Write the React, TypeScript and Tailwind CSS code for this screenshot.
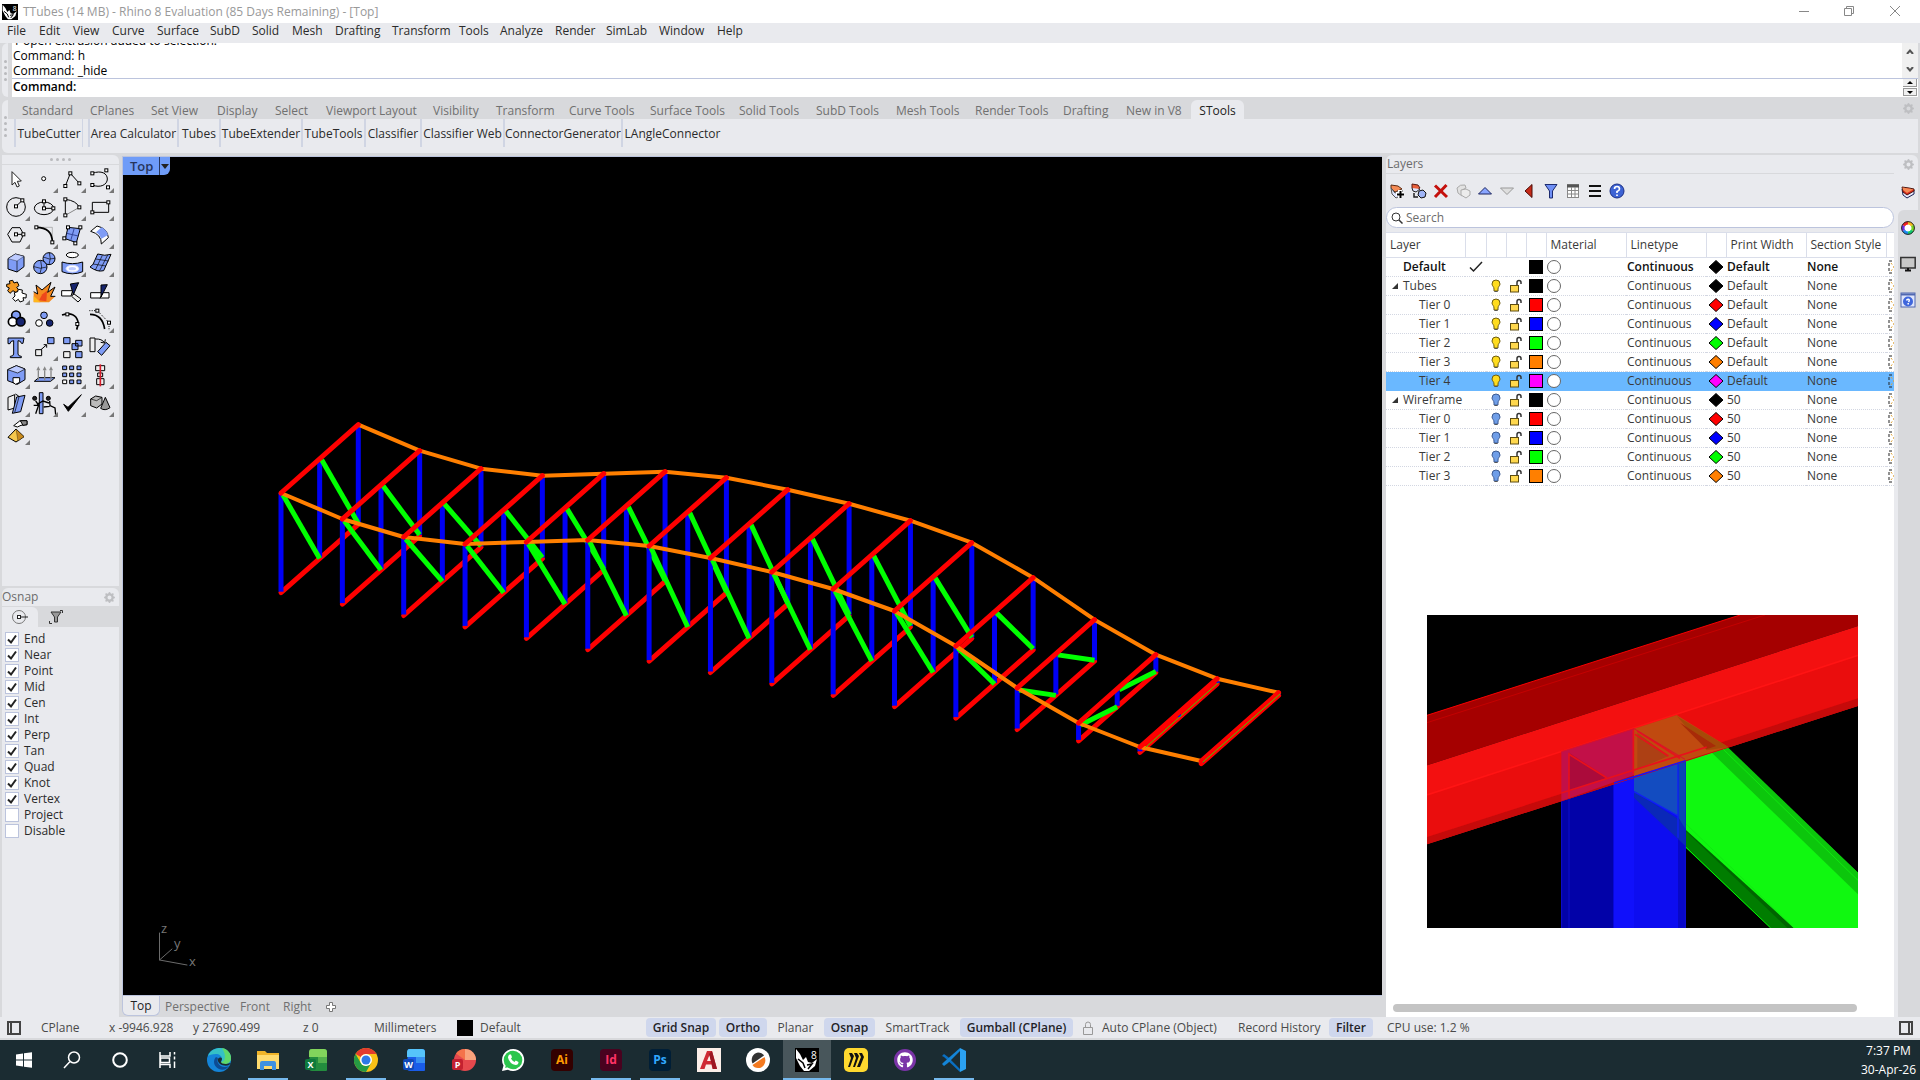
import type { ReactNode } from 'react';
import { FaGithub, FaWhatsapp } from 'react-icons/fa';
import { BsGearFill } from 'react-icons/bs';

const menus = [
  ['File', 'w-8'],
  ['Edit', 'w-[34px]'],
  ['View', 'w-[39px]'],
  ['Curve', 'w-[45px]'],
  ['Surface', 'w-[53px]'],
  ['SubD', 'w-[42px]'],
  ['Solid', 'w-10'],
  ['Mesh', 'w-[43px]'],
  ['Drafting', 'w-[57px]'],
  ['Transform', 'w-[67px]'],
  ['Tools', 'w-[41px]'],
  ['Analyze', 'w-[55px]'],
  ['Render', 'w-[51px]'],
  ['SimLab', 'w-[53px]'],
  ['Window', 'w-[58px]'],
  ['Help', 'w-10'],
];

const toolTabs = [
  ['Standard', 'w-[68px]'],
  ['CPlanes', 'w-[61px]'],
  ['Set View', 'w-[66px]'],
  ['Display', 'w-[58px]'],
  ['Select', 'w-[51px]'],
  ['Viewport Layout', 'w-[107px]'],
  ['Visibility', 'w-[63px]'],
  ['Transform', 'w-[73px]'],
  ['Curve Tools', 'w-[81px]'],
  ['Surface Tools', 'w-[89px]'],
  ['Solid Tools', 'w-[77px]'],
  ['SubD Tools', 'w-20'],
  ['Mesh Tools', 'w-[79px]'],
  ['Render Tools', 'w-[88px]'],
  ['Drafting', 'w-[63px]'],
  ['New in V8', 'w-[73px]'],
];

const toolButtons = [
  ['TubeCutter', 'w-[69px]'],
  ['Area Calculator', 'w-[89px]'],
  ['Tubes', 'w-[42px]'],
  ['TubeExtender', 'w-[82px]'],
  ['TubeTools', 'w-[63px]'],
  ['Classifier', 'w-14'],
  ['Classifier Web', 'w-[83px]'],
  ['ConnectorGenerator', 'w-[118px]'],
  ['LAngleConnector', 'w-[101px]'],
];

const osnaps = ['End', 'Near', 'Point', 'Mid', 'Cen', 'Int', 'Perp', 'Tan', 'Quad', 'Knot', 'Vertex', 'Project', 'Disable'];

type Layer = { name: string; color: string; width: string; on?: boolean; child?: boolean; current?: boolean; selected?: boolean };

const layers: Layer[] = [
  { name: 'Default', color: '#000000', width: 'Default', current: true },
  { name: 'Tubes', color: '#000000', width: 'Default', on: true },
  { name: 'Tier 0', color: '#ff0000', width: 'Default', on: true, child: true },
  { name: 'Tier 1', color: '#0000ff', width: 'Default', on: true, child: true },
  { name: 'Tier 2', color: '#00ff00', width: 'Default', on: true, child: true },
  { name: 'Tier 3', color: '#ff7f00', width: 'Default', on: true, child: true },
  { name: 'Tier 4', color: '#ff00ff', width: 'Default', on: true, child: true, selected: true },
  { name: 'Wireframe', color: '#000000', width: '50' },
  { name: 'Tier 0', color: '#ff0000', width: '50', child: true },
  { name: 'Tier 1', color: '#0000ff', width: '50', child: true },
  { name: 'Tier 2', color: '#00ff00', width: '50', child: true },
  { name: 'Tier 3', color: '#ff7f00', width: '50', child: true },
];

/* ---------- tool palette ---------- */

function Nodes({ at }: { at: number[][] }) {
  return (
    <>
      {at.map(([x, y]) => (
        <rect key={`${x}-${y}`} x={x - 4.5} y={y - 4.5} width="9" height="9" fill="#fff" stroke="#000" strokeWidth="3" />
      ))}
    </>
  );
}

const blue = '#7f9cf5';
const navy = '#16246e';

// All glyphs share one sheet, 84 units per cell, first cell at (5, 44)
const glyphs: { name: string; flyout?: boolean; art: ReactNode }[] = [
  { name: 'Pointer', art: <path d="M35 64V104L44 96L50 110L57 107L51 93L63 92Z" fill="#fff" stroke="#222" strokeWidth="3" /> },
  { name: 'Point', flyout: true, art: <circle cx="130" cy="85" r="6" fill="#fff" stroke="#000" strokeWidth="3" /> },
  { name: 'Polyline', flyout: true, art: <><path d="M195 107L210 69L237 99" /><Nodes at={[[195, 107], [210, 69], [237, 99]]} /></> },
  { name: 'Curve', flyout: true, art: <><path d="M276 69C303 59 321 69 321 86C321 103 300 114 276 104" /><Nodes at={[[276, 69], [276, 104], [318, 60], [323, 111]]} /></> },
  { name: 'Circle', flyout: true, art: <><circle cx="47" cy="170" r="28" /><path d="M47 168L66 150" /><Nodes at={[[47, 168], [66, 150]]} /></> },
  { name: 'Ellipse', flyout: true, art: <><ellipse cx="131" cy="174" rx="29" ry="19" /><path d="M131 153V174H160" /><Nodes at={[[131, 153], [131, 174], [159, 174]]} /></> },
  { name: 'Arc', flyout: true, art: <><path d="M195 195L237 171" stroke="#888" /><path d="M195 195V147Q228 151 237 171" /><Nodes at={[[195, 147], [237, 171], [195, 195]]} /></> },
  { name: 'Rectangle', flyout: true, art: <><path d="M276 156H325V186H276Z" /><Nodes at={[[324, 156], [276, 186]]} /></> },
  { name: 'Polygon', flyout: true, art: <><path d="M35 232H59L70 252L59 275H35L22 252Z" /><path d="M47 252H69" /><Nodes at={[[47, 252], [69, 252]]} /></> },
  { name: 'Fillet', flyout: true, art: <><path d="M108 231H156V276" stroke="#999" strokeWidth="2" /><path d="M108 231Q156 231 156 276" strokeWidth="5" /><Nodes at={[[108, 231], [156, 276]]} /></> },
  { name: 'Surface from points', flyout: true, art: <><path d="M203 231L240 235L228 277L195 265Z" fill={blue} /><path d="M222 233L211 271M199 249L234 257" stroke="#34479c" /><Nodes at={[[203, 231], [240, 231], [192, 264], [225, 279]]} /></> },
  { name: 'Revolve', flyout: true, art: <><path d="M271 243L290 227Q322 234 324 262L303 281Q304 252 271 243Z" fill="#fff" /><path d="M287 246L304 231Q319 239 323 254L302 266Q299 252 287 246Z" fill={blue} stroke="none" /></> },
  { name: 'Box', flyout: true, art: <><path d="M23 325L45 311L71 318V349L50 365L23 356Z" fill={blue} /><path d="M23 325L50 332L71 318L45 311Z" fill="#bdcbff" strokeWidth="1" /><path d="M50 332V365" strokeWidth="2" /></> },
  { name: 'Sphere', flyout: true, art: <><circle cx="146" cy="325" r="18" fill={blue} /><path d="M129 320Q148 330 164 324M147 307Q153 325 146 343" strokeWidth="2" /><circle cx="120" cy="350" r="20" fill={blue} /><path d="M101 349Q120 358 139 350M121 331Q128 350 119 369" strokeWidth="2" /></> },
  { name: 'Offset surface', flyout: true, art: <><ellipse cx="216" cy="314" rx="18" ry="8" fill="#fff" /><path d="M185 335Q216 345 247 335V364Q216 377 185 364Z" fill={blue} /><ellipse cx="216" cy="355" rx="19" ry="10" fill="#fff" stroke="#d9e0ff" /><ellipse cx="216" cy="355" rx="11" ry="5" fill="#bdcbff" stroke="none" /></> },
  { name: 'Patch', flyout: true, art: <><path d="M292 311Q314 318 332 312L310 361Q291 366 269 350L278 342Z" fill={blue} /><path d="M306 315L285 359M322 314L297 363M286 326L325 332M278 341L317 347" strokeWidth="2" /></> },
  { name: 'Explode parts', flyout: true, art: <><path d="M19 402l10-2-2-8 10-2 4 8 10-3 5 11-7 5 6 8-8 8-9-6-9 8-7-8 5-8-8-4Z" fill="#f59a23" /><path d="M42 427l10-3 2-7 12 2-1 9 13 4-1 11-9-1 2 9-11 4-5-8-9 6-8-9 7-7Z" fill="#fff" /></> },
  { name: 'Explode', art: <><path d="M100 456V424L112 431L107 404L125 419L152 396L142 426L164 410L151 438H165L146 456Z" fill="#f58a1f" stroke="none" /><path d="M100 424L112 431L107 404L125 419L152 396L142 426L164 410L151 438H165" /><path d="M100 455V436L120 456Z" fill="#ffb71c" stroke="none" /><path d="M126 432L140 421L138 453L116 450Z" fill="#ed471c" stroke="none" /></> },
  { name: 'Trim', art: <><path d="M184 421H217L212 437H184Z" fill="#fff" /><path d="M220 430L242 446L233 455L214 438Z" fill="#eee" /><path d="M210 401L235 397L219 433Z" fill={navy} /></> },
  { name: 'Split', art: <><path d="M271 427H326V443H271Z" fill="#fff" /><path d="M302 404L321 403L302 440Z" fill={navy} /><path d="M299 444L307 429" /></> },
  { name: 'Group', flyout: true, art: <><g stroke="#000" strokeWidth="5"><circle cx="47" cy="495" r="13" fill={blue} /><circle cx="37" cy="514" r="13" fill="#fff" /><circle cx="61" cy="514" r="13" fill={navy} /></g></> },
  { name: 'Ungroup', art: <><circle cx="131" cy="495" r="10" fill={blue} /><circle cx="116" cy="518" r="10" fill="#fff" /><circle cx="148" cy="518" r="10" fill={navy} /></> },
  { name: 'Edit points', art: <><path d="M185 494Q225 482 233 514Q234 525 229 538" strokeWidth="5" /><Nodes at={[[201, 492], [231, 521]]} /></> },
  { name: 'Control points', flyout: true, art: <><path d="M269 492Q306 492 313 536" strokeWidth="5" /><path d="M267 481H291L326 517V541" strokeDasharray="3 4" /><Nodes at={[[291, 481], [326, 517]]} /></> },
  { name: 'Text', art: <path d="M23 563H71L68 579H63Q62 571 53 571V611Q54 618 63 618V622H30V618Q39 618 40 611V571Q30 571 29 580H23Z" fill={blue} /> },
  { name: 'Move', flyout: true, art: <><path d="M106 598H124V616H106Z" fill="#eee" /><path d="M142 562H161V580H142Z" fill={blue} /><path d="M122 598L138 584M130 583H139V592" /></> },
  { name: 'Copy', art: <><path d="M190 562H209V580H190ZM226 570H245V587H226ZM215 580H233V598H215ZM226 604H245V622H226Z" fill={blue} /><path d="M190 604H209V622H190Z" fill="#eee" /></> },
  { name: 'Rotate', art: <><path d="M269 563H284V604H269Z" fill="#eee" /><path d="M317 576L329 586L304 615L292 604Z" fill={blue} /><path d="M285 566Q305 565 312 577M301 576L313 578L315 567" /></> },
  { name: 'Solid corner', flyout: true, art: <><path d="M22 658L48 646L74 656V688L51 702L22 691Z" fill={blue} /><path d="M22 658L52 668L74 656L48 646Z" fill="#bdcbff" strokeWidth="2" /><path d="M38 682H58V696L46 702L38 696Z" fill="#fff" /></> },
  { name: 'Extrude', flyout: true, art: <><path d="M102 693L115 682H164L151 693Z" fill={blue} /><path d="M114 690V660M133 690V660M152 690V660" stroke="#888" strokeWidth="4" /><path d="M108 660L114 648L120 660ZM127 660L133 648L139 660ZM146 660L152 648L158 660Z" fill="#888" stroke="none" /></> },
  { name: 'Array', flyout: true, art: <><path d="M187 647H199V658H187ZM208 647H220V658H208ZM230 647H242V658H230ZM187 668H199V679H187ZM208 668H220V679H208ZM230 668H242V679H230ZM208 689H220V700H208ZM230 689H242V700H230Z" fill={blue} /><path d="M187 689H199V700H187Z" fill="#fff" /></> },
  { name: 'Align', flyout: true, art: <><path d="M286 646H313V661H286ZM292 668H307V679H292ZM289 685H311V703H289Z" fill="#eee" /><path d="M300 642V708" stroke="#d51d2b" strokeWidth="5" /></> },
  { name: 'Shear', flyout: true, art: <><path d="M23 741L43 733V773L23 779Z" fill="#eee" /><path d="M45 731L55 737L53 750" /><path d="M49 740L74 735L61 784L36 789Z" fill={blue} /><path d="M56 740L43 787" strokeWidth="2" /></> },
  { name: 'Flow', flyout: true, art: <><g fill="#222"><circle cx="103" cy="744" r="6" /><circle cx="144" cy="744" r="6" /></g><path d="M117 727H128V790H117Z" fill={blue} /><path d="M106 752L115 764L106 790M115 765H100M146 758L128 752L110 762M148 752L149 766L164 773L166 793M130 770L148 768" strokeWidth="4" /></> },
  { name: 'Check', flyout: true, art: <path d="M190 762L204 783L243 733L203 771Z" fill="#000" /> },
  { name: 'Primitives', flyout: true, art: <><path d="M271 746L286 737L305 741V761L289 773L271 766Z" fill="#bbb" /><path d="M271 746L289 751L305 741" strokeWidth="2" /><path d="M315 741L329 772Q314 783 301 774Z" fill="#999" /></> },
  { name: 'Render', flyout: true, art: <><path d="M40 826L58 812L80 812V823L62 825L51 830Z" fill="#fff" /><path d="M60 811L80 811V823L68 825Z" fill="#888" /><path d="M47 836L71 859L47 875L23 861Z" fill="#f5c84d" /><path d="M47 836L53 872L71 859Z" fill="#c88b1e" strokeWidth="1" /></> },
];

function ToolPalette() {
  return (
    <section className="h-[431px] shrink-0 rounded-tr-md bg-[#e9eaee]">
      <div className="flex h-[10px] items-center justify-center gap-[3px] border-b border-[#d8d9dc]">
        {[0, 1, 2, 3].map((i) => (
          <span key={i} className="size-[3px] rounded-full bg-[#b9babd]" />
        ))}
      </div>
      <div className="grid grid-cols-[repeat(4,28px)]">
        {glyphs.map((g, i) => {
          const x = 5 + 84 * (i % 4);
          const y = 44 + 84 * Math.floor(i / 4);
          return (
            <button key={g.name} aria-label={g.name} className="size-7">
              <svg viewBox={`${x} ${y} 84 84`} className="size-7" fill="none" stroke="#000" strokeWidth="3">
                {g.art}
                {g.flyout && <path d={`M${x + 84} ${y + 69}V${y + 84}H${x + 69}Z`} fill="#777" stroke="none" />}
              </svg>
            </button>
          );
        })}
      </div>
    </section>
  );
}

function OsnapPanel() {
  return (
    <section className="flex flex-1 flex-col rounded-t-md bg-[#e9eaee]">
      <header className="flex h-[19px] items-center justify-between border-b border-[#d8d9dc] pr-1 text-[#6c6c6c]">
        <h2>Osnap</h2>
        <BsGearFill className="size-[11px] text-[#bebfc2]" />
      </header>
      <div className="flex h-5 bg-[#d8d9dc]">
        <button aria-label="Object snaps" className="flex w-9 items-center justify-center rounded-tr-md bg-[#e9eaee]">
          <svg viewBox="0 0 18 16" className="h-4 w-[18px]" fill="none" stroke="#777">
            <circle cx="8" cy="8" r="6.5" />
            <path d="M8 8h9" stroke="#222" />
            <rect x="6.5" y="6.5" width="3" height="3" fill="#fff" stroke="#222" />
          </svg>
        </button>
        <button aria-label="Selection filter" className="flex w-9 items-center justify-center">
          <svg viewBox="0 0 16 16" className="size-4" fill="none" stroke="#333">
            <path d="M3 3h10L9.500 8v5h-3V8z" fill="#999" />
            <path d="M12 1.500h2.500V4M1.500 12v2.500H4" />
          </svg>
        </button>
      </div>
      <div className="pt-1">
        {osnaps.map((name, i) => (
          <label key={name} className="flex h-4 items-center gap-[5px] pl-[3px] text-[#2b2b2b]">
            <span className="grid size-[14px]">
              <input type="checkbox" defaultChecked={i < 11} className="peer col-start-1 row-start-1 size-[14px] appearance-none border border-[#bcc4dd] bg-white" />
              <svg viewBox="0 0 14 14" className="pointer-events-none col-start-1 row-start-1 hidden size-[14px] peer-checked:block" fill="none" stroke="#222" strokeWidth="2">
                <path d="M3 7.500L6 10.500L11 3.500" />
              </svg>
            </span>
            {name}
          </label>
        ))}
      </div>
    </section>
  );
}

/* ---------- viewport ---------- */

// upper chord height of every frame, front side
const chord = [493, 519, 537, 544, 542, 540, 546, 558, 572, 589, 611, 646, 688, 723, 747, 761];
const frames = chord.map((top, i) => ({ x: 281 + 61.35 * i, top, bottom: 592.7 + 11.4 * i }));
const DX = 77.3;
const DY = -68.3;

function Truss() {
  return (
    <svg viewBox="123 157 1259 839" preserveAspectRatio="xMinYMin meet" className="block w-full" fill="none" strokeLinecap="round">
      {frames.map((f, i) => (
        <g key={i}>
          <path d={`M${f.x} ${f.bottom}l${DX} ${DY}`} stroke="#f00" strokeWidth="5" />
          <g stroke="#0000f5" strokeWidth="5" strokeLinecap="butt">
            {[1, 0.5, 0].map((t) => (
              <path key={t} d={`M${f.x + DX * t} ${f.top + DY * t}V${f.bottom + DY * t - 1}`} />
            ))}
          </g>
          {i < 14 && (
            <g stroke="#00ff00" strokeWidth="5" strokeLinecap="butt">
              <path d={`M${f.x + 2} ${f.top + 2}L${f.x + DX / 2} ${f.bottom + DY / 2}`} />
              <path d={`M${f.x + DX / 2 + 2} ${f.top + DY / 2 + 1}L${f.x + DX} ${f.bottom + DY - 1}`} />
            </g>
          )}
        </g>
      ))}
      <g stroke="#ff7f00" strokeWidth="4" strokeLinejoin="round">
        <polyline points={frames.map((f) => `${f.x + DX},${f.top + DY}`).join(' ')} />
        <polyline points={frames.map((f) => `${f.x},${f.top}`).join(' ')} />
      </g>
      {frames.map((f, i) => (
        <path key={i} d={`M${f.x} ${f.top}l${DX} ${DY}`} stroke="#f00" strokeWidth="5" />
      ))}
      <path d="M1146 747L1218 683M1203 762L1280 694" stroke="#3fd000" strokeWidth="1" />
      <g stroke="#6c6c6c">
        <path d="M159.500 933V960L187 965M159.500 960L172 949" />
      </g>
      <g fill="#777" className="font-['Open_Sans',sans-serif] text-[13px]">
        <text x="161" y="933">z</text>
        <text x="174" y="948">y</text>
        <text x="189" y="966">x</text>
      </g>
    </svg>
  );
}

function Viewport() {
  return (
    <main className="flex min-w-0 flex-1 flex-col pt-px">
      <div className="relative min-h-0 flex-1 overflow-hidden border border-r-0 border-[#bcc4dd] bg-black">
        <Truss />
        <div className="absolute top-0 left-0 flex h-[18px] rounded-br-md bg-[#6f9cf8] text-[13px] leading-[17px] font-semibold text-[#26355c]">
          <button className="w-9 pl-[7px] text-left">Top</button>
          <button aria-label="Viewport menu" className="flex w-[11px] items-center justify-center border-l border-[#26355c]">
            <svg viewBox="0 0 8 5" className="h-[5px] w-2" fill="#222">
              <path d="M0 0h8L4 5z" />
            </svg>
          </button>
        </div>
      </div>
      <nav className="flex h-[21px] shrink-0 items-start leading-[22px] text-[#707070]">
        <button className="h-5 w-[38px] rounded-b-md border border-t-0 border-[#bcc4dd] bg-[#e9eaee] leading-[20px] text-[#222]">Top</button>
        <button className="w-[75px] pl-[5px] text-left">Perspective</button>
        <button className="w-[43px] pl-[5px] text-left">Front</button>
        <button className="w-12 pl-[5px] text-left">Right</button>
        <button aria-label="New viewport" className="flex h-[22px] items-center">
          <svg viewBox="0 0 10 10" className="size-[10px]" fill="#fff" stroke="#777">
            <path d="M3.500.5h3v3h3v3h-3v3h-3v-3h-3v-3h3z" />
          </svg>
        </button>
      </nav>
    </main>
  );
}

/* ---------- layers ---------- */

const layerTools: { name: string; art: ReactNode }[] = [
  { name: 'New layer', art: <><path d="M3 3l7 1 4 3-7 3-4-4z" fill="#f58b55" stroke="#5a2a12" /><path d="M3 6l1 6 4 4 6-3V8l-7 3z" fill="#dfe6ff" stroke="#555" /><path d="M12 8v8M8 12h8" stroke="#fff" strokeWidth="4" /><path d="M12.500 9v7M9 12.500h7" stroke="#000" strokeWidth="2" /></> },
  { name: 'New sublayer', art: <><path d="M2 2l6 1 2 3-5 3-3-3z" fill="#e8603a" stroke="#5a1a12" /><path d="M2 6l1 3 3 1 4-3" fill="#dfe6ff" stroke="#222" /><path d="M4 11v4h4" stroke="#222" strokeWidth="1.500" /><path d="M9 9l4-1 3 3-1 4-4 1-3-3z" fill="#9fb4f5" stroke="#111" /></> },
  { name: 'Delete layer', art: <path d="M3 3.500L15 15M14.500 3L3 15" stroke="#c4100c" strokeWidth="3" /> },
  { name: 'Duplicate layer', art: <><path d="M3 6q3-4 8-3l1 3-4 2v6l-4-3z" fill="#e2e2e2" stroke="#aaa" /><path d="M7 8l5-1 4 2v4l-4 3-5-3z" fill="#ececec" stroke="#aaa" /></> },
  { name: 'Move up', art: <path d="M2.500 12L9 5.500L15.500 12z" fill="#8aa6ff" stroke="#1c2560" /> },
  { name: 'Move down', art: <path d="M2.500 6L9 12.500L15.500 6z" fill="#dedede" stroke="#999" /> },
  { name: 'Move out', art: <path d="M5 9L12 2.500V15.500z" fill="#c62a18" stroke="#4a0c08" /> },
  { name: 'Filter', art: <path d="M3 2.500h12L10.500 9v7h-3V9z" fill="#6f8ff5" stroke="#1c2a6e" /> },
  { name: 'Columns', art: <><rect x="3.500" y="2.500" width="11" height="13" fill="#fff" stroke="#888" /><path d="M3 4h12" stroke="#555" strokeWidth="3" /><path d="M3 8.500h12M3 12h12M7.500 5v10M11 5v10" stroke="#888" /></> },
  { name: 'Menu', art: <path d="M3 4h12M3 9h12M3 14h12" stroke="#111" strokeWidth="2" /> },
  { name: 'Help', art: <><circle cx="9" cy="9" r="7" fill="#3d63d4" stroke="#1b2f86" /><path d="M6.500 7Q6.500 4.500 9 4.500T11.500 7Q11.500 8.500 9 9.500V11M9 12.500V14" stroke="#fff" strokeWidth="1.700" /></> },
];

function LayerRow({ layer }: { layer: Layer }) {
  const { name, color, width, on, child, current, selected } = layer;
  return (
    <tr className={`h-[19px] border-b border-dotted ${selected ? 'border-[#6ab8ff] bg-[#6ab8ff]' : 'border-[#d3d7e2]'} ${current ? 'font-semibold text-[#111]' : ''}`}>
      <td className={child ? 'pl-[33px]' : 'pl-[6px]'}>
        <span className="flex items-center">
          {!child && (
            <svg viewBox="0 0 11 8" className="h-2 w-[11px]">
              {!current && <path d="M6 1v6H0z" fill="#333" />}
            </svg>
          )}
          {name}
        </span>
      </td>
      <td>
        {current && (
          <svg viewBox="0 0 14 12" className="mx-auto h-3 w-[14px]" fill="none" stroke="#222" strokeWidth="1.500">
            <path d="M1 6.500L4.500 10L13 1" />
          </svg>
        )}
      </td>
      <td>
        {!current && (
          <svg viewBox="0 0 10 14" className="mx-auto h-[14px] w-[10px]">
            <path d="M5 1a4 4 0 0 0-4 4c0 2 2 2.500 2 5v2h4v-2c0-2.500 2-3 2-5a4 4 0 0 0-4-4z" fill={on ? '#ffdc1e' : '#6f9ee8'} stroke={on ? '#6d5c10' : '#3c5a92'} />
            <path d="M3.500 12.500h3" stroke="#555" />
          </svg>
        )}
      </td>
      <td>
        {!current && (
          <svg viewBox="0 0 12 14" className="mx-auto h-[14px] w-3">
            <path d="M7 7V3.500a2 2 0 0 1 4 0V5" fill="none" stroke="#333" strokeWidth="1.500" />
            <rect x=".5" y="6.500" width="8" height="6.500" fill="#ffd84d" stroke="#5c4c12" />
          </svg>
        )}
      </td>
      <td>
        <svg viewBox="0 0 14 14" className="mx-auto size-[14px]">
          <rect x=".5" y=".5" width="13" height="13" fill={color} stroke="#000" />
        </svg>
      </td>
      <td className="pl-px">
        <svg viewBox="0 0 14 14" className="size-[14px]">
          <circle cx="7" cy="7" r="6.500" fill="#fff" stroke="#666" />
        </svg>
      </td>
      <td className="pl-px">Continuous</td>
      <td>
        <svg viewBox="0 0 16 14" className="mx-auto h-[14px] w-4">
          <path d="M8 .5L15 7L8 13.500L1 7z" fill={color} stroke="#000" />
        </svg>
      </td>
      <td className="pl-px">{width}</td>
      <td className="pl-px">None</td>
      <td>
        <svg viewBox="0 0 6 14" className="ml-[2px] h-[14px] w-[6px]" fill="none" stroke="#222">
          <path d="M4 1H1v12h3" strokeDasharray="3 2" />
          <path d="M3 3l3 4-3 4" stroke="#e0a43a" strokeDasharray="2 2" />
        </svg>
      </td>
    </tr>
  );
}

function LayersTable() {
  const heads = ['Layer', '', '', '', '', 'Material', 'Linetype', '', 'Print Width', 'Section Style', ''];
  return (
    <table className="w-full table-fixed border-collapse leading-[16px] whitespace-nowrap text-[#3a3a3a]">
      <colgroup>
        <col className="w-[79px]" />
        <col className="w-[21px]" />
        <col className="w-5" />
        <col className="w-5" />
        <col className="w-5" />
        <col className="w-20" />
        <col className="w-20" />
        <col className="w-5" />
        <col className="w-20" />
        <col className="w-20" />
        <col className="w-2" />
      </colgroup>
      <thead>
        <tr className="h-[25px] border-y border-[#dadeea]">
          {heads.map((h, i) => (
            <th key={i} className="border-r border-[#dadeea] p-0 pl-1 text-left font-normal last:border-r-0">
              {h}
            </th>
          ))}
        </tr>
      </thead>
      <tbody>
        {layers.map((layer, i) => (
          <LayerRow key={i} layer={layer} />
        ))}
      </tbody>
    </table>
  );
}

// close-up of a joint: chord, post and diagonal with their overlaps
function JointPreview() {
  return (
    <svg viewBox="21 42 1293 939" className="h-[313px] w-[431px] bg-black">
      <path d="M640 580L797 684L1125 981H1052L797 740L640 590Z" fill="#007d00" />
      <path d="M797 690L1102 981H1125L797 668Z" fill="#006400" />
      <path d="M797 478L910 430L1314 815V981H1122L797 686Z" fill="#10f810" />
      <path d="M865 445L925 440L1314 815V880Z" fill="#0cc60c" />
      <path d="M905 440L1314 838M797 668L1122 981" stroke="#10e810" strokeWidth="3" />
      <path d="M797 738L1052 981" stroke="#00ff00" strokeWidth="3" />
      <path d="M424 590L797 475V981H424Z" fill="#0d0df0" />
      <path d="M424 590L580 545V981H424Z" fill="#0202a8" />
      <path d="M582 545L642 525V981H582Z" fill="#1010fb" />
      <path d="M774 480H797V981H774Z" fill="#0808c8" />
      <path d="M425 590V981M447 590V981M796 478V981" stroke="#1414e0" strokeWidth="2" fill="none" />
      <path d="M642 525L775 485V645L642 572Z" fill="#134cc0" />
      <path d="M642 570L797 668V736L642 590Z" fill="#0a28b8" />
      <path d="M775 485L797 478V684L775 650Z" fill="#0a45b4" />
      <path d="M642 572L775 645M774 485V710" stroke="#1020f5" strokeWidth="4" fill="none" />
      <path d="M21 343L960 42H1314V75L21 493Z" fill="#a50000" />
      <path d="M21 365L1035 42" stroke="#c40000" strokeWidth="3" />
      <path d="M21 343L960 42" stroke="#f50000" strokeWidth="3" />
      <path d="M21 493L1314 75V315L21 730Z" fill="#f31010" />
      <path d="M21 582L1314 163V292L21 708Z" fill="#ea0d0d" />
      <path d="M21 582L1314 163" stroke="#ff1414" strokeWidth="5" />
      <path d="M21 708L1314 292V315L21 730Z" fill="#c60a0a" />
      <path d="M424 452L642 383V522L424 600Z" fill="#c21048" />
      <path d="M447 455L562 530L447 570Z" fill="#ab0b3b" />
      <path d="M642 383L770 342L925 438L642 526Z" fill="#c04a10" />
      <path d="M770 345L925 438L860 448Z" fill="#a54a08" />
      <path d="M652 395L745 465L652 505Z" fill="#ad4014" />
      <path d="M780 365L888 435L860 445Z" fill="#a82a08" />
      <path d="M424 576L860 438M447 455V590M447 460L560 530M640 385V520M652 390L780 472M645 400L745 465" stroke="#e8101c" strokeWidth="5" fill="none" />
      <path d="M424 452L642 383L795 475" stroke="#d8102c" strokeWidth="3" fill="none" />
      <path d="M582 546L797 479" stroke="#1414ff" strokeWidth="4" />
    </svg>
  );
}

function LayersPanel() {
  return (
    <aside className="flex w-[532px] shrink-0 flex-col overflow-hidden rounded-t-md bg-[#e9eaee]">
      <header className="flex h-[18px] shrink-0 items-center justify-between pr-1 pl-px text-[#6c6c6c]">
        <h2>Layers</h2>
        <BsGearFill className="size-[11px] text-[#bebfc2]" />
      </header>
      <div className="flex min-h-0 flex-1">
        <div className="flex min-w-0 flex-1 flex-col border-t border-[#d8d9dc]">
          <div className="flex h-[33px] shrink-0 items-center gap-1 pl-[2px]">
            {layerTools.map((t) => (
              <button key={t.name} aria-label={t.name} className="size-[18px]">
                <svg viewBox="0 0 18 18" className="size-[18px]" fill="none">
                  {t.art}
                </svg>
              </button>
            ))}
          </div>
          <label className="mb-1 flex h-[21px] shrink-0 items-center gap-[3px] rounded-full border border-[#bcc4dd] bg-white pl-1">
            <svg viewBox="0 0 12 12" className="size-3" fill="none" stroke="#333">
              <circle cx="5" cy="5" r="4" />
              <path d="M8 8l3.500 3.500" strokeWidth="1.500" />
            </svg>
            <input aria-label="Search" placeholder="Search" className="min-w-0 flex-1 outline-none placeholder:text-[#6c6c6c]" />
          </label>
          <div className="flex min-h-0 flex-1 flex-col bg-white">
            <LayersTable />
            <div className="flex flex-1 items-center justify-center pt-[52px] pl-1">
              <JointPreview />
            </div>
            <div className="mr-[37px] mb-[5px] ml-[7px] h-2 rounded-full bg-[#c4c4c4]" />
          </div>
        </div>
        <nav className="ml-1 flex w-5 flex-col">
          <button aria-label="Layers" className="flex h-[37px] items-center justify-center">
            <svg viewBox="0 0 14 14" className="size-[14px]">
              <path d="M1 4l1 6 4 3 7-4V5L6 9z" fill="#e8eaff" stroke="#1b2255" />
              <path d="M1 2l7 1 5 1v2L6 10 2 7z" fill="#d92a1c" stroke="#4c1a12" />
              <path d="M1.500 2.500l6 1 5 1L6 8 2 5z" fill="#f58a55" />
            </svg>
          </button>
          <div className="flex flex-1 flex-col rounded-tl-md bg-[#d8d9dc]">
            <button aria-label="Materials" className="flex h-9 items-center justify-center">
              <svg viewBox="0 0 14 14" className="size-[14px]" fill="none" strokeWidth="3">
                <circle cx="7" cy="7" r="4" fill="#fff" />
                <path d="M7 2a5 5 0 0 1 4.300 2.500" stroke="#f5b81c" />
                <path d="M11.300 4.500a5 5 0 0 1 0 5" stroke="#7ad820" />
                <path d="M11.300 9.500A5 5 0 0 1 7 12" stroke="#10c86c" />
                <path d="M7 12a5 5 0 0 1-4.300-2.500" stroke="#1c8cf0" />
                <path d="M2.700 9.500a5 5 0 0 1 0-5" stroke="#7030e0" />
                <path d="M2.700 4.500A5 5 0 0 1 7 2" stroke="#f02020" />
                <circle cx="7" cy="7" r="6.400" stroke="#222" strokeWidth="1" />
              </svg>
            </button>
            <button aria-label="Display" className="flex h-9 items-center justify-center">
              <svg viewBox="0 0 16 16" className="size-4">
                <path d="M.8 1.500h14.400v10.500H.8z" fill="#c8c8c8" stroke="#333" strokeWidth="1.500" />
                <path d="M5 14.500h6M8 12v2" stroke="#111" strokeWidth="2" />
              </svg>
            </button>
            <button aria-label="Help" className="flex h-9 items-center justify-center">
              <svg viewBox="0 0 16 16" className="size-4" fill="none">
                <rect x="1" y="1" width="14" height="14" fill="#dfe5fb" stroke="#5068b0" />
                <path d="M1 2.500h14" stroke="#5068b0" strokeWidth="2" />
                <circle cx="8" cy="9.500" r="5" fill="#3f66dc" />
                <path d="M6.500 8.500Q7 7 8.500 7.300T8.500 10M8.200 11v1.500" stroke="#fff" strokeWidth="1.500" />
              </svg>
            </button>
          </div>
        </nav>
      </div>
    </aside>
  );
}

/* ---------- status bar ---------- */

const toggle = 'h-[19px] rounded-sm';
const toggleOn = `${toggle} bg-[#cfd7ed] font-semibold text-[#1f1f28]`;

function StatusBar() {
  return (
    <footer className="flex h-[23px] shrink-0 items-center border-b-2 border-[#d8d9dc] bg-[#e9eaee] pl-[7px] text-[#4a4a4a]">
      <svg viewBox="0 0 14 14" className="mr-5 size-[14px]" fill="none" stroke="#444" strokeWidth="2">
        <path d="M1 1h12v12H1zM4 1v12" />
      </svg>
      <span className="w-[68px]">CPlane</span>
      <span className="w-[84px]">x -9946.928</span>
      <span className="w-[110px]">y 27690.499</span>
      <span className="w-[71px]">z 0</span>
      <span className="w-[83px]">Millimeters</span>
      <span className="mr-[7px] size-4 bg-black" />
      <span className="w-[166px]">Default</span>
      <button className={`${toggleOn} mr-[3px] w-[70px]`}>Grid Snap</button>
      <button className={`${toggleOn} w-12`}>Ortho</button>
      <button className={`${toggle} w-[57px]`}>Planar</button>
      <button className={`${toggleOn} w-[51px]`}>Osnap</button>
      <button className={`${toggle} w-[85px]`}>SmartTrack</button>
      <button className={`${toggleOn} mr-[9px] w-[113px]`}>Gumball (CPlane)</button>
      <svg viewBox="0 0 12 14" className="mr-2 h-[14px] w-3" fill="none" stroke="#999">
        <path d="M1.500 6.500h9v7h-9zM3.500 6V3.500a2.500 2.500 0 0 1 5 0V6" />
      </svg>
      <button className="w-[136px] text-left">Auto CPlane (Object)</button>
      <button className="w-[91px] text-left">Record History</button>
      <button className={`${toggleOn} mr-[14px] w-11`}>Filter</button>
      <span className="flex-1">CPU use: 1.2 %</span>
      <svg viewBox="0 0 14 14" className="mr-[7px] size-[14px]" fill="none" stroke="#444" strokeWidth="2">
        <path d="M1 1h12v12H1zM10 1v12" />
      </svg>
    </footer>
  );
}

/* ---------- taskbar ---------- */

function RhinoMark() {
  return (
    <>
      <rect width="24" height="24" fill="#000" />
      <path d="M1 1l4 5 3 6 3-3 2 5 4 1 5-4-2 7-6 5H9l-4-5-4-8z" fill="#fff" />
      <path d="M3 11l5 4 2 5M12 17l5-1-4 5" stroke="#000" fill="none" strokeWidth="1.500" />
      <text x="16" y="11" fill="#fff" className="font-['Open_Sans',sans-serif] text-[10px] leading-none">8</text>
    </>
  );
}

function Office({ letter, dark, light, mid }: { letter: string; dark: string; light: string; mid: string }) {
  return (
    <>
      <path d="M5 1h14a3 3 0 0 1 3 3v18a1 1 0 0 1-1 1H7a3 3 0 0 1-3-3z" fill={mid} />
      <path d="M7 1h12a3 3 0 0 1 3 3v5H4V4a3 3 0 0 1 3-3z" fill={light} />
      <path d="M13 9h9v6h-9z" fill={light} opacity=".5" />
      <rect x="0" y="11" width="11" height="11" rx="2" fill={dark} />
      <text x="5.500" y="20" textAnchor="middle" fill="#fff" className="font-['Open_Sans',sans-serif] text-[9px] font-bold">{letter}</text>
    </>
  );
}

function AdobeTile({ label, bg, fg }: { label: string; bg: string; fg: string }) {
  return (
    <>
      <rect x="1" y="1" width="22" height="22" rx="4" fill={bg} />
      <text x="12" y="16" textAnchor="middle" fill={fg} className="font-['Open_Sans',sans-serif] text-[12px] font-bold">{label}</text>
    </>
  );
}

const system: { name: string; art: ReactNode }[] = [
  { name: 'Start', art: <path d="M4 6.500l7-1v6H4zM12 5.300l8-1.100v7.300h-8zM4 12.500h7v6l-7-1zM12 12.500h8v7.300l-8-1.100z" fill="#fff" /> },
  { name: 'Search', art: <path d="M4 20l6-6.500M14 4a5.500 5.500 0 1 1 0 11a5.500 5.500 0 0 1 0-11z" stroke="#fff" strokeWidth="1.500" fill="none" /> },
  { name: 'Cortana', art: <circle cx="12" cy="12" r="6.800" fill="none" stroke="#fff" strokeWidth="2" /> },
  { name: 'Task view', art: <path d="M4 4v4h10V4M4 20v-3.500h10V20M4.500 10h9v4.500h-9zM4 8v9M18.500 4v2.500M18.500 8.500v3M18.500 13.500V20" stroke="#fff" strokeWidth="1.500" fill="none" /> },
];

const apps: { name: string; running?: boolean; active?: boolean; art: ReactNode }[] = [
  {
    name: 'Edge',
    art: (
      <>
        <circle cx="12" cy="12" r="12" fill="#1484d8" />
        <path d="M1 8C3 2 9 0 13 0c7 0 11 5 11 10 0 4-3 6-6 6-3 0-4-1-4-2s1-1 1-3c0-3-3-5-6-5-4 0-7 1-8 2z" fill="#35c1c6" />
        <path d="M15 0c6 1 9 6 9 10 0 4-3 6-6 6-3 0-4-1-4-2 4 0 6-6 1-14z" fill="#5fd96b" />
        <path d="M9 9c-3 3-3 9 3 12 4 2 8 0 10-3-4 2-9 1-11-3-1-2-1-4 0-5z" fill="#0d4c94" />
        <path d="M11 10c-1 2 0 4 2 6 3 2 7 2 9 1l2-2-5 1c-3 0-5-1-5-2s1-2 1-3c0-2-3-2-4 0z" fill="#1b2c33" />
      </>
    ),
  },
  {
    name: 'File Explorer',
    running: true,
    art: (
      <>
        <path d="M1 3h8l2 2h12v16H1z" fill="#f0b429" />
        <path d="M1 7h22v14H1z" fill="#ffdb6e" />
        <path d="M4 22v-7q0-2 2-2h12q2 0 2 2v7h-4v-4H8v4z" fill="#3f91e0" />
      </>
    ),
  },
  { name: 'Excel', art: <Office letter="X" dark="#0f7a3c" light="#82d45c" mid="#238c3e" /> },
  {
    name: 'Chrome',
    running: true,
    art: (
      <>
        <circle cx="12" cy="12" r="12" fill="#fbc116" />
        <path d="M1.600 6A12 12 0 0 1 22.400 6H12A6 6 0 0 0 6.800 9z" fill="#e33b2e" />
        <path d="M1.600 6L6.800 15A6 6 0 0 0 12 18l5.200-3L12 24A12 12 0 0 1 1.600 6z" fill="#269a43" />
        <circle cx="12" cy="12" r="6" fill="#fff" />
        <circle cx="12" cy="12" r="4.500" fill="#2f78e6" />
      </>
    ),
  },
  { name: 'Word', art: <Office letter="W" dark="#1048b8" light="#56c4fa" mid="#1a5ce8" /> },
  {
    name: 'PowerPoint',
    art: (
      <>
        <circle cx="13" cy="12" r="11" fill="#e5484d" />
        <path d="M13 1a11 11 0 0 1 11 11H13z" fill="#f9a37c" />
        <path d="M13 1v11L4 5.500A11 11 0 0 1 13 1z" fill="#f4734a" />
        <rect x="0" y="11" width="11" height="11" rx="2" fill="#c3202f" />
        <text x="5.500" y="20" textAnchor="middle" fill="#fff" className="font-['Open_Sans',sans-serif] text-[9px] font-bold">P</text>
      </>
    ),
  },
  {
    name: 'WhatsApp',
    art: (
      <>
        <path d="M12 1a11 11 0 1 1-5 20.700L1 23l1.500-5.500A11 11 0 0 1 12 1z" fill="#fff" />
        <circle cx="12" cy="12" r="9.300" fill="#2cc64e" />
        <FaWhatsapp x="3" y="3" size={18} color="#2cc64e" />
        <path d="M8.500 6.500l1.500 0 1 2.800-1 1.200q1 2.200 3.500 3.400l1.200-1.300 2.800 1.300q0 3-2.800 3.100Q8.500 16 7 9.500 7 7.500 8.500 6.500z" fill="#fff" />
      </>
    ),
  },
  { name: 'Illustrator', art: <AdobeTile label="Ai" bg="#330000" fg="#ff9a00" /> },
  { name: 'InDesign', running: true, art: <AdobeTile label="Id" bg="#49021f" fg="#ff3366" /> },
  { name: 'Photoshop', running: true, art: <AdobeTile label="Ps" bg="#001e36" fg="#31a8ff" /> },
  {
    name: 'AutoCAD',
    art: (
      <>
        <rect width="24" height="24" fill="#fbeee8" />
        <path d="M3 21L10 3h5l5 18h-4.500l-1-4.500H9L7.500 21zM10 13h4l-1.500-6z" fill="#cf2a33" fillRule="evenodd" />
        <path d="M15 3l5 18h-4L12 6z" fill="#9c1722" />
      </>
    ),
  },
  {
    name: 'PrusaSlicer',
    art: (
      <>
        <circle cx="12" cy="12" r="12" fill="#fff" />
        <path d="M6.500 15.500A7 7.500 0 0 1 12 4.500q4 0 6 3z" fill="#333" />
        <path d="M18.500 9A7 7.500 0 0 1 12 20q-4 0-5.500-3z" fill="#f47a20" />
      </>
    ),
  },
  { name: 'Rhino', running: true, active: true, art: <RhinoMark /> },
  {
    name: 'Miro',
    art: (
      <>
        <rect width="24" height="24" rx="5" fill="#ffd92f" />
        <path d="M5 5h3l2 3-4 11H4l3-9zM10 5h3l2 3-4 11H9l3-9zM15 5h3l2 4-4 10h-3l4-10z" fill="#111" />
      </>
    ),
  },
  {
    name: 'GitHub Desktop',
    art: (
      <>
        <circle cx="12" cy="12" r="11" fill="#7b34a8" />
        <FaGithub x="4" y="4" size={16} color="#fff" />
      </>
    ),
  },
  {
    name: 'Visual Studio Code',
    running: true,
    art: (
      <>
        <path d="M0 8l2-2 4 3 12 12v3L2 9z" fill="#0a6fc2" />
        <path d="M0 16l2 2 4-3L18 3V0L2 14z" fill="#1485d8" />
        <path d="M18 0l6 3v18l-6 3z" fill="#2ba1f2" />
      </>
    ),
  },
];

function Taskbar() {
  return (
    <div className="flex h-10 shrink-0 items-stretch bg-[#1b2c32] pr-1 text-white">
      {system.map((s) => (
        <button key={s.name} aria-label={s.name} className="flex w-12 items-center justify-center">
          <svg viewBox="0 0 24 24" className="size-6">{s.art}</svg>
        </button>
      ))}
      <div className="ml-[3px] flex gap-px">
        {apps.map((a) => (
          <button key={a.name} aria-label={a.name} className={`flex w-12 flex-col items-center justify-end ${a.active ? 'bg-[#48565b]' : ''}`}>
            <svg viewBox="0 0 24 24" className="mb-[6px] size-6">{a.art}</svg>
            <span className={`h-[2px] ${a.active ? 'w-full' : 'w-10'} ${a.running ? 'bg-[#76b9ed]' : ''}`} />
          </button>
        ))}
      </div>
      <div className="ml-auto flex flex-col justify-between py-[2px] text-center leading-[17px]">
        <span>7:37 PM</span>
        <span>30-Apr-26</span>
      </div>
    </div>
  );
}

function Grip() {
  return (
    <div className="flex w-[6px] flex-col items-center justify-center gap-[3px] rounded-l-md bg-[#e9eaee]">
      {[0, 1, 2, 3].map((i) => (
        <span key={i} className="size-[3px] rounded-full bg-[#b9babd]" />
      ))}
    </div>
  );
}

export default function App() {
  return (
    <div className="flex h-screen flex-col overflow-hidden bg-[#d8d9dc] font-['Open_Sans','Noto_Sans',sans-serif] text-[12px] whitespace-nowrap">
      <header className="flex h-[23px] shrink-0 items-center bg-white pl-[2px] text-[#999]">
        <svg viewBox="0 0 24 24" className="mr-[5px] size-4">
          <RhinoMark />
        </svg>
        <h1 className="flex-1">TTubes (14 MB) - Rhino 8 Evaluation (85 Days Remaining) - [Top]</h1>
        <svg viewBox="0 0 102 12" className="mr-[19px] mb-[2px] h-3 w-[102px]" fill="none" stroke="#888">
          <path d="M0 6.500h10M45.500 3.500h7v7h-7zM47.500 3V1.500h7v7H53M91 1l10 10M101 1L91 11" />
        </svg>
      </header>

      <nav className="flex h-5 shrink-0 items-start bg-[#e9eaee] pl-[7px] text-[#2b2b2b]">
        {menus.map(([name, width]) => (
          <button key={name} className={`${width} h-4 text-left leading-[16px]`}>
            {name}
          </button>
        ))}
      </nav>

      <section className="flex h-[54px] shrink-0 pr-[2px] pl-[2px]">
        <Grip />
        <div className="ml-[4px] flex min-w-0 flex-1 flex-col bg-white">
          <div className="flex h-[35px]">
            <div className="flex flex-1 flex-col justify-end overflow-hidden pl-px leading-[15px]">
              <p>1 open extrusion added to selection.</p>
              <p>Command: h</p>
              <p>Command: _hide</p>
            </div>
            <div className="flex w-4 flex-col items-center justify-between bg-[#f0f0f0] py-[6px]">
              <svg viewBox="0 0 8 5" className="h-[5px] w-2" fill="none" stroke="#555" strokeWidth="2">
                <path d="M1 5L4 1.500L7 5" />
              </svg>
              <svg viewBox="0 0 8 5" className="h-[5px] w-2" fill="none" stroke="#555" strokeWidth="2">
                <path d="M1 0L4 3.500L7 0" />
              </svg>
            </div>
          </div>
          <div className="flex h-[19px] border-t border-[#bcc4dd] pl-px leading-[16px]">
            <label htmlFor="command" className="font-semibold">Command:</label>
            <input id="command" className="h-4 min-w-0 flex-1 outline-none" />
            <div className="flex w-[15px] flex-col gap-px pr-px">
              <button aria-label="Previous" className="flex h-2 items-center justify-center border-r border-b border-[#999] bg-[#f0f0f0]">
                <svg viewBox="0 0 6 3" className="h-[3px] w-[6px]"><path d="M3 0l3 3H0z" /></svg>
              </button>
              <button aria-label="Next" className="flex h-2 items-center justify-center border border-[#999] bg-[#f0f0f0]">
                <svg viewBox="0 0 6 3" className="h-[3px] w-[6px]"><path d="M3 3l3-3H0z" /></svg>
              </button>
            </div>
          </div>
        </div>
      </section>

      <section className="flex h-[56px] shrink-0 pt-[3px] pr-[2px] pl-[2px]">
        <Grip />
        <div className="flex min-w-0 flex-1 flex-col">
          <div className="flex h-[19px] items-stretch pl-[14px] text-[#707070]">
            {toolTabs.map(([name, width]) => (
              <button key={name} className={`${width} pt-[2px] text-left`}>
                {name}
              </button>
            ))}
            <button className="-ml-2 w-[53px] rounded-t-md bg-[#e9eaee] pt-[2px] text-[#222]">STools</button>
            <BsGearFill className="mt-[3px] mr-1 ml-auto size-[11px] text-[#bebfc2]" />
          </div>
          <div className="flex h-[34px] bg-[#e9eaee] pl-[6px] text-[#2b2b2b]">
            {toolButtons.map(([name, width], i) => (
              <button key={name} className={`${width} ${i === 0 ? 'mr-[5px] border-r' : ''} h-7 border-l-2 border-[#d0d5e3] pt-[2px]`}>
                {name}
              </button>
            ))}
          </div>
        </div>
      </section>

      <div className="flex min-h-0 flex-1 pt-[2px] pr-[2px] pl-[2px]">
        <div className="mr-[3px] flex w-[117px] shrink-0 flex-col gap-[2px]">
          <ToolPalette />
          <OsnapPanel />
        </div>
        <Viewport />
        <div className="w-1" />
        <LayersPanel />
      </div>

      <StatusBar />
      <Taskbar />
    </div>
  );
}
